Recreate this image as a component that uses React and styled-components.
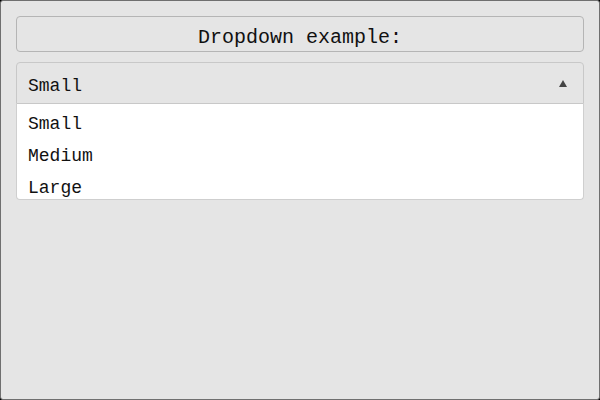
import styled, { createGlobalStyle } from 'styled-components';

const GlobalStyle = createGlobalStyle`
  html, body {
    margin: 0;
    padding: 0;
    background: #000;
  }
  * {
    box-sizing: border-box;
  }
`;

const options = ['Small', 'Medium', 'Large'];

const App = () => {
  const selected = 'Small';

  return (
    <>
      <GlobalStyle />
      <Window>
        <Title>Dropdown example:</Title>
        <Dropdown>
          <Select>
            <span>{selected}</span>
            <Arrow />
          </Select>
          <List>
            {options.map(option => (
              <Option key={option}>{option}</Option>
            ))}
          </List>
        </Dropdown>
      </Window>
    </>
  );
};

export default App;

const Window = styled.div`
  width: 600px;
  height: 400px;
  display: flex;
  flex-direction: column;
  gap: 10px;
  padding: 15px;
  background: #e5e5e5;
  border: 1px solid #6f6f6f;
  border-radius: 3px;
  font-family: 'Liberation Mono', monospace;
  font-size: 18px;
  color: #111;
`;

const Title = styled.div`
  height: 36px;
  display: flex;
  align-items: center;
  justify-content: center;
  padding-top: 7px;
  font-size: 20px;
  border: 1px solid #b5b5b5;
  border-radius: 4px;
`;

const Dropdown = styled.div`
  display: flex;
  flex-direction: column;
`;

const Select = styled.div`
  height: 42px;
  display: flex;
  align-items: center;
  justify-content: space-between;
  padding: 5px 16px 0 11px;
  border: 1px solid #c8c8c8;
  border-radius: 4px 4px 0 0;
`;

const Arrow = styled.span`
  width: 0;
  height: 0;
  border-left: 4px solid transparent;
  border-right: 4px solid transparent;
  border-bottom: 7px solid #444;
  margin-top: -5px;
`;

const List = styled.div`
  height: 96px;
  overflow: hidden;
  display: flex;
  flex-direction: column;
  padding-top: 4px;
  background: #fff;
  border: 1px solid #cfcfcf;
  border-top: none;
  border-radius: 0 0 4px 4px;
`;

const Option = styled.div`
  flex: none;
  height: 32px;
  display: flex;
  align-items: center;
  padding-left: 11px;
`;
